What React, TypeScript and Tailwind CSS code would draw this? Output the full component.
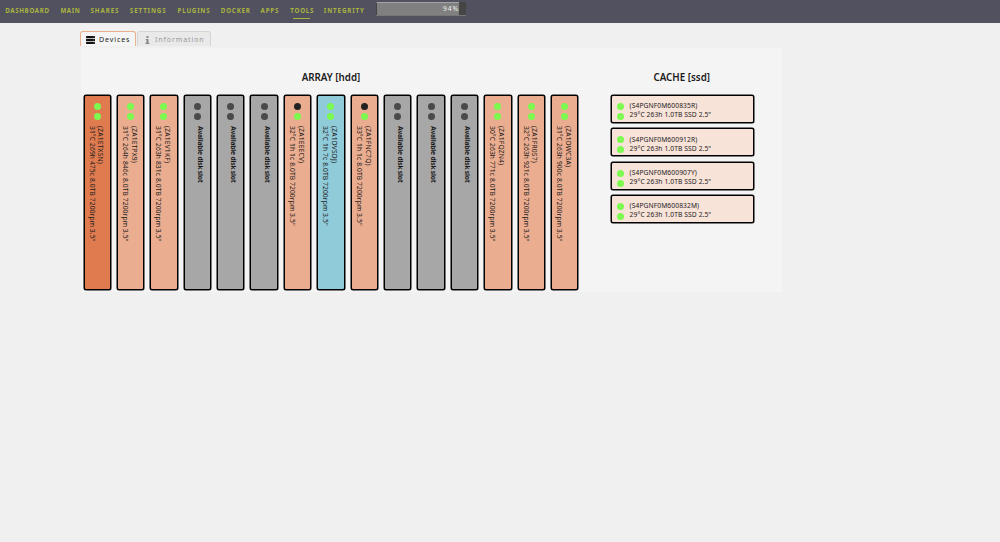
import React from 'react';

interface Disk {
  serial?: string;
  info?: string;
  bg: string;
  top: string;
  bottom: string;
}

const GREEN = 'bg-[#7dfa4f]';
const DARK = 'bg-[#4a4a4a]';
const BLACK = 'bg-[#222222]';
const PEACH = 'bg-[#ebad90]';

const EMPTY: Disk = { bg: 'bg-[#a7a7a7]', top: DARK, bottom: DARK };

const hdds: Disk[] = [
  { serial: '(ZA1ETXSN)', info: '31°C 269h 475c 8.0TB 7200rpm 3.5"', bg: 'bg-[#e07b50]', top: GREEN, bottom: GREEN },
  { serial: '(ZA1ETPX9)', info: '31°C 264h 846c 8.0TB 7200rpm 3.5"', bg: PEACH, top: GREEN, bottom: GREEN },
  { serial: '(ZA1EV1KF)', info: '31°C 263h 831c 8.0TB 7200rpm 3.5"', bg: PEACH, top: GREEN, bottom: GREEN },
  EMPTY,
  EMPTY,
  EMPTY,
  { serial: '(ZA1EEECV)', info: '32°C 1h 1c 8.0TB 7200rpm 3.5"', bg: PEACH, top: BLACK, bottom: GREEN },
  { serial: '(ZA1DVSDJ)', info: '32°C 1h 7c 8.0TB 7200rpm 3.5"', bg: 'bg-[#90cbda]', top: GREEN, bottom: GREEN },
  { serial: '(ZA1FNC7Q)', info: '33°C 1h 1c 8.0TB 7200rpm 3.5"', bg: PEACH, top: BLACK, bottom: GREEN },
  EMPTY,
  EMPTY,
  EMPTY,
  { serial: '(ZA1FQZN4)', info: '30°C 263h 771c 8.0TB 7200rpm 3.5"', bg: PEACH, top: GREEN, bottom: GREEN },
  { serial: '(ZA1FR0S7)', info: '32°C 263h 921c 8.0TB 7200rpm 3.5"', bg: PEACH, top: GREEN, bottom: GREEN },
  { serial: '(ZA1DWC3A)', info: '31°C 263h 900c 8.0TB 7200rpm 3.5"', bg: PEACH, top: GREEN, bottom: GREEN },
];

const ssds = ['(S4PGNF0M600835R)', '(S4PGNF0M600912R)', '(S4PGNF0M600907Y)', '(S4PGNF0M600832M)'];

const menu = [
  { label: 'DASHBOARD', width: 'w-[55.2px] tracking-[0.65px]' },
  { label: 'MAIN', width: 'w-[30.2px] tracking-[0.6px]' },
  { label: 'SHARES', width: 'w-[39.3px] tracking-[0.9px]' },
  { label: 'SETTINGS', width: 'w-[47.7px] tracking-[0.9px]' },
  { label: 'PLUGINS', width: 'w-[43.3px] tracking-[0.8px]' },
  { label: 'DOCKER', width: 'w-[39.7px] tracking-[0.8px]' },
  { label: 'APPS', width: 'w-[29.8px] tracking-[0.85px]' },
  { label: 'TOOLS', width: 'w-[33.5px] tracking-[0.75px]', active: true },
  { label: 'INTEGRITY', width: 'w-[52.3px] tracking-[0.9px]' },
];

const Led: React.FC<{ color: string }> = ({ color }) => (
  <span className={`block size-[7px] shrink-0 rounded-full ${color}`} />
);

const HddSlot: React.FC<{ disk: Disk }> = ({ disk }) => (
  <div
    className={`flex h-[195px] w-[27.4px] shrink-0 flex-col items-center rounded-[2px] border border-black pt-[7px] shadow-[0_0_0_0.5px_#000] ${disk.bg}`}
  >
    <div className="flex flex-col gap-[2.8px]">
      <Led color={disk.top} />
      <Led color={disk.bottom} />
    </div>
    {disk.serial ? (
      <div className="mt-[6px] mr-[3px] h-[160px] whitespace-nowrap text-[6.7px] leading-[8.7px] tracking-[0.11px] [writing-mode:vertical-rl]">
        <div className="tracking-[0.2px]">{disk.serial}</div>
        <div>{disk.info}</div>
      </div>
    ) : (
      <div className="mt-[6px] ml-[4px] h-[160px] whitespace-nowrap text-[6.7px] font-bold leading-[8.7px] tracking-[-0.2px] [writing-mode:vertical-rl]">
        Available disk slot
      </div>
    )}
  </div>
);

const SsdSlot: React.FC<{ serial: string }> = ({ serial }) => (
  <div className="flex h-[28px] w-[142.5px] rounded-[2px] border border-black bg-[#f8e3d9] pl-[5px] shadow-[0_0_0_0.5px_#000]">
    <div className="flex flex-col gap-[2.8px] pt-[7px]">
      <Led color={GREEN} />
      <Led color={GREEN} />
    </div>
    <div className="ml-[5.6px] whitespace-nowrap pt-[5.3px] text-[6.7px] leading-[9px] tracking-[0.1px]">
      <div>{serial}</div>
      <div>29°C 263h 1.0TB SSD 2.5"</div>
    </div>
  </div>
);

const ServerIcon = () => (
  <svg className="h-2 w-[9px]" viewBox="0 0 9 8" fill="#111">
    <rect width="9" height="2.2" rx="0.4" />
    <rect y="2.9" width="9" height="2.2" rx="0.4" />
    <rect y="5.8" width="9" height="2.2" rx="0.4" />
    <path d="M6.8 1.1h1M6.8 4h1M6.8 6.9h1" stroke="#aaa" strokeWidth="0.5" />
  </svg>
);

const InfoIcon = () => (
  <svg className="h-2 w-[5px]" viewBox="0 0 5 8" fill="#8a8a8a">
    <rect x="1.4" width="2.1" height="2" rx="0.3" />
    <path d="M0.7 2.9h2.8v3.9h0.9V8H0.5V6.8h0.9V4.1H0.7z" />
  </svg>
);

const App: React.FC = () => {
  return (
    <div className="h-[542px] w-[1000px] overflow-hidden bg-[#f0f0f0] font-['Noto_Sans',sans-serif] text-[#1c1b1b]">
      <header className="flex h-[23px] bg-[#525160] pl-[5.2px]">
        <nav className="flex text-[6.2px] font-bold leading-[9px] text-[#a9b53f]">
          {menu.map((item) => (
            <div key={item.label} className={`shrink-0 whitespace-nowrap pt-[5.5px] ${item.width}`}>
              {item.label}
              {item.active && <div className="ml-[3px] mt-[3px] h-px w-[17px] bg-[#a9b53f]" />}
            </div>
          ))}
        </nav>
        <div className="mt-[2px] flex h-[14px] w-[89.5px] border-b border-[#777] bg-[#454545]">
          <div className="h-[13px] w-[83px] border-l border-t border-l-[#444] border-t-[#a5a5a5] bg-[#808080] text-right text-[6.7px] leading-[11px] tracking-[1px] text-[#eee]">
            94%
          </div>
        </div>
      </header>

      <div className="ml-[80px] mt-2 flex h-[17px] gap-[1px] text-[7px] tracking-[0.9px]">
        <div className="flex h-[15px] w-[56px] items-center gap-1 rounded-t-[3px] border border-b-0 border-[#eab08a] bg-[#f4f4f4] pl-[5px] pt-[1.5px]">
          <ServerIcon />
          <span>Devices</span>
        </div>
        <div className="flex h-[15px] w-[74px] items-center gap-[5px] rounded-t-[3px] border border-b-0 border-[#d5d5d5] bg-[#e9e9e9] pl-[7px] pt-[1.5px] text-[#999]">
          <InfoIcon />
          <span>Information</span>
        </div>
      </div>

      <main className="ml-[81px] flex h-[244px] w-[701px] bg-[#f4f4f4] pl-[2.5px]">
        <section className="w-[495px]">
          <h2 className="pt-[22.5px] text-center text-[9.8px] font-semibold leading-[14px]">ARRAY [hdd]</h2>
          <div className="mt-[10.5px] flex gap-[6px]">
            {hdds.map((disk, i) => (
              <HddSlot key={i} disk={disk} />
            ))}
          </div>
        </section>
        <section className="ml-[32.5px] w-[142.5px]">
          <h2 className="pt-[22.5px] pr-px text-center text-[9.8px] font-semibold leading-[14px]">CACHE [ssd]</h2>
          <div className="mt-[10.5px] flex flex-col gap-[5.4px]">
            {ssds.map((serial) => (
              <SsdSlot key={serial} serial={serial} />
            ))}
          </div>
        </section>
      </main>
    </div>
  );
};

export default App;
